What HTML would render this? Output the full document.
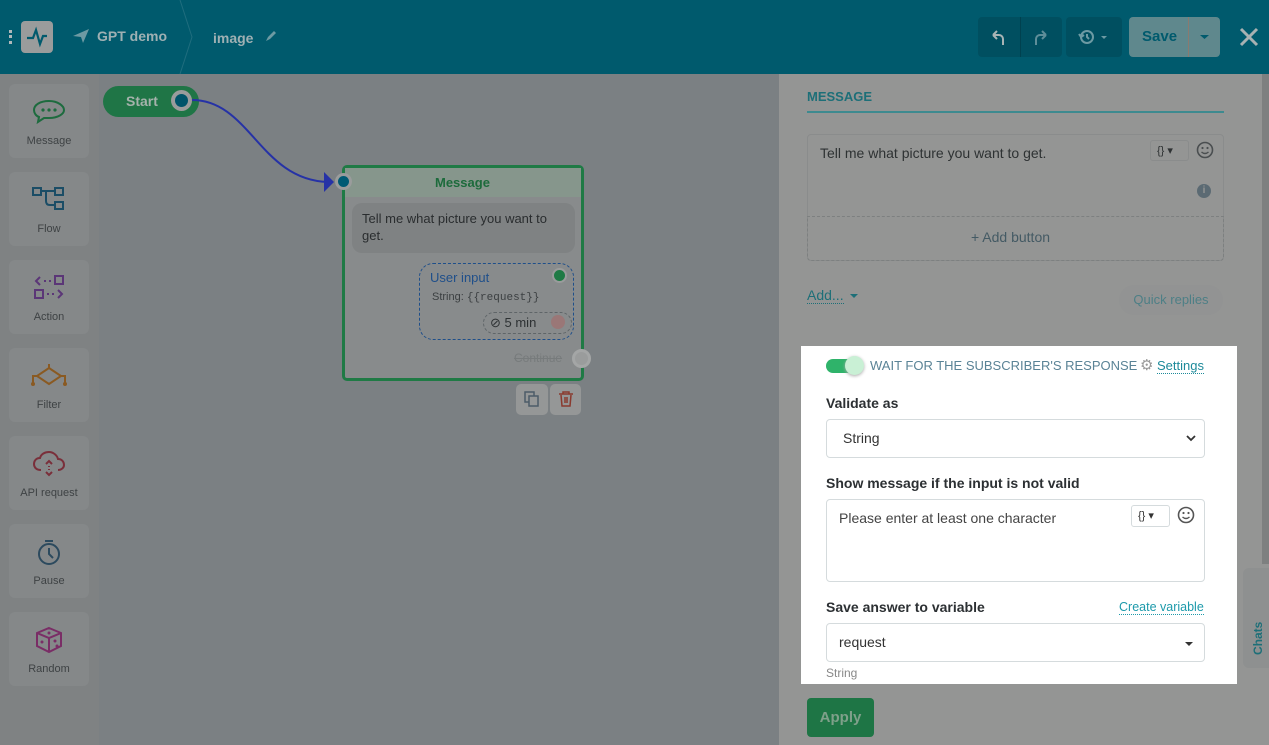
<!DOCTYPE html>
<html><head><meta charset="utf-8"><style>
*{box-sizing:border-box;margin:0;padding:0}
body{width:1269px;height:745px;overflow:hidden;font-family:"Liberation Sans",sans-serif;position:relative;background:#7b8083}
.hdr{position:absolute;left:0;top:0;width:1269px;height:74px;background:#005a6d}
.abs{position:absolute}
.side{position:absolute;left:0;top:74px;width:99px;height:671px;background:#7f8283}
.item{position:absolute;left:9px;width:80px;height:74px;background:#858889;border-radius:6px;text-align:center;font-size:11px;color:#3e4244}
.item svg{display:block;margin:14px auto 9px}
.panel{position:absolute;left:779px;top:74px;width:490px;height:671px;background:#949594}
.hl{position:absolute;left:801px;top:346px;width:436px;height:338px;background:#fff}
.lbl{position:absolute;font-size:14px;font-weight:bold;color:#2c3033}
.inp{position:absolute;border:1px solid #d5dbdd;border-radius:4px;background:#fff;font-size:14px;color:#333}
.btn{position:absolute;background:#004f60;border-radius:4px}
</style></head><body>
<div class="hdr">
  <div class="abs" style="left:9px;top:30px;width:3px;height:14px;border-left:3px dotted #b0b8ba"></div>
  <div class="abs" style="left:21px;top:21px;width:32px;height:32px;background:#9a9c9c;border-radius:4px"></div>
  <svg class="abs" style="left:24px;top:24px" width="26" height="26"><path d="M3 14h6l3-8 4 14 3-8h4" stroke="#005a6d" stroke-width="2.2" fill="none"/></svg>
  <svg class="abs" style="left:73px;top:29px" width="16" height="14"><path d="M0 7 L16 0 L10 14 L8 8Z" fill="#6d9aa3"/></svg>
  <div class="abs" style="left:97px;top:28px;font-size:14px;font-weight:bold;color:#9fb0b3">GPT demo</div>
  <svg class="abs" style="left:178px;top:0" width="16" height="74"><path d="M2 0 L14 37 L2 74" stroke="#1f6d7e" fill="none"/></svg>
  <div class="abs" style="left:213px;top:30px;font-size:14px;font-weight:bold;color:#9fb0b3">image</div>
  <svg class="abs" style="left:265px;top:30px" width="12" height="12"><path d="M1 11 L3 7 L9 1 L11 3 L5 9Z" fill="#6d9aa3"/></svg>
  <div class="btn" style="left:978px;top:17px;width:84px;height:40px"></div>
  <div class="abs" style="left:1020px;top:17px;width:1px;height:40px;background:#00414f"></div>
  <svg class="abs" style="left:990px;top:28px" width="16" height="18"><path d="M3 7h6a4 4 0 0 1 4 4v6M3 7l4-4M3 7l4 4" stroke="#a8b4b5" stroke-width="2" fill="none"/></svg>
  <svg class="abs" style="left:1033px;top:28px" width="16" height="18"><path d="M13 7H7a4 4 0 0 0-4 4v6M13 7l-4-4M13 7l-4 4" stroke="#5e8e99" stroke-width="2" fill="none"/></svg>
  <div class="btn" style="left:1066px;top:17px;width:56px;height:40px"></div>
  <svg class="abs" style="left:1078px;top:28px" width="32" height="18"><circle cx="9" cy="9" r="6" stroke="#6d9aa3" stroke-width="2" fill="none"/><path d="M9 6v3l2 2M1 6l2 3 3-2" stroke="#6d9aa3" stroke-width="2" fill="none"/><path d="M23 8h6l-3 3z" fill="#6d9aa3"/></svg>
  <div class="abs" style="left:1129px;top:17px;width:91px;height:40px;background:#5f888d;border-radius:4px"></div>
  <div class="abs" style="left:1188px;top:17px;width:1px;height:40px;background:#8a7a70"></div>
  <div class="abs" style="left:1142px;top:28px;font-size:15px;font-weight:bold;color:#005a6d">Save</div>
  <svg class="abs" style="left:1199px;top:34px" width="12" height="6"><path d="M1 1h9l-4.5 4z" fill="#005a6d"/></svg>
  <svg class="abs" style="left:1239px;top:27px" width="20" height="20"><path d="M2 2l16 16M18 2L2 18" stroke="#a8b1b2" stroke-width="3"/></svg>
</div>
<div class="side">
  <div class="item" style="top:10px"><svg width="36" height="28"><path d="M18 3C9 3 3 7 3 12c0 3 2 6 5 7l-1 5 6-4c2 0 3 0 5 0 9 0 15-4 15-8S27 3 18 3z" stroke="#1d6b3e" stroke-width="2" fill="none"/><circle cx="12" cy="12" r="1.6" fill="#1d6b3e"/><circle cx="18" cy="12" r="1.6" fill="#1d6b3e"/><circle cx="24" cy="12" r="1.6" fill="#1d6b3e"/></svg>Message</div>
  <div class="item" style="top:98px"><svg width="36" height="28"><rect x="2" y="2" width="8" height="7" stroke="#1b4d66" stroke-width="2" fill="none"/><rect x="24" y="2" width="8" height="7" stroke="#1b4d66" stroke-width="2" fill="none"/><rect x="24" y="16" width="8" height="7" stroke="#1b4d66" stroke-width="2" fill="none"/><path d="M10 5h14M15 5v10q0 4 4 4h5" stroke="#1b4d66" stroke-width="2" fill="none"/></svg>Flow</div>
  <div class="item" style="top:186px"><svg width="36" height="28"><path d="M9 3l-4 4 4 4M13 7h2M18 7h2" stroke="#5b3677" stroke-width="2" fill="none"/><rect x="24" y="2" width="8" height="8" stroke="#5b3677" stroke-width="2" fill="none"/><rect x="4" y="16" width="8" height="8" stroke="#5b3677" stroke-width="2" fill="none"/><path d="M16 20h2M21 20h2M27 16l4 4-4 4" stroke="#5b3677" stroke-width="2" fill="none"/></svg>Action</div>
  <div class="item" style="top:274px"><svg width="40" height="28"><path d="M20 2v4M20 6l12 8-12 8-12-8zM8 14H4v7M32 14h4v7" stroke="#8a5a22" stroke-width="2" fill="none"/><circle cx="4" cy="22" r="2" fill="#8a5a22"/><circle cx="36" cy="22" r="2" fill="#8a5a22"/></svg>Filter</div>
  <div class="item" style="top:362px"><svg width="36" height="28"><path d="M10 20C5 20 3 17 3 14s2-6 6-6c1-4 5-6 9-6s8 3 9 7c4 0 6 3 6 6s-3 5-6 5" stroke="#7a2f3a" stroke-width="2" fill="none"/><path d="M15 14l3-3 3 3M15 22l3 3 3-3M18 16v1M18 19v1" stroke="#7a2f3a" stroke-width="2" fill="none"/></svg>API request</div>
  <div class="item" style="top:450px"><svg width="36" height="28"><circle cx="18" cy="16" r="10" stroke="#2c4a5e" stroke-width="2" fill="none"/><path d="M14 3h8M18 10v6l4 4" stroke="#2c4a5e" stroke-width="2" fill="none"/></svg>Pause</div>
  <div class="item" style="top:538px"><svg width="36" height="28"><path d="M18 2l12 5v13l-12 6-12-6V7z M6 7l12 5 12-5 M18 12v14" stroke="#7a2d66" stroke-width="2" fill="none"/><circle cx="18" cy="7" r="1.5" fill="#7a2d66"/><circle cx="11" cy="16" r="1.5" fill="#7a2d66"/><circle cx="24" cy="15" r="1.5" fill="#7a2d66"/><circle cx="26" cy="20" r="1.5" fill="#7a2d66"/></svg>Random</div>
</div>
<!-- canvas -->
<div class="abs" style="left:103px;top:86px;width:96px;height:31px;background:#1f7546;border-radius:16px"></div>
<div class="abs" style="left:126px;top:93px;font-size:14px;font-weight:bold;color:#a5b2ab">Start</div>
<div class="abs" style="left:171px;top:90px;width:21px;height:21px;border-radius:50%;background:#9a9c9c"></div>
<div class="abs" style="left:175px;top:94px;width:13px;height:13px;border-radius:50%;background:#00546a"></div>
<svg class="abs" style="left:190px;top:95px" width="150" height="100"><path d="M2 5C60 5 70 85 138 87" stroke="#2632a6" stroke-width="2" fill="none"/><path d="M134 77l10 10-10 10z" fill="#2632a6"/></svg>
<div class="abs" style="left:342px;top:165px;width:242px;height:216px;border:3px solid #1f7a45;border-radius:5px;background:#888b8c"></div>
<div class="abs" style="left:345px;top:168px;width:236px;height:29px;background:#86968c"></div>
<div class="abs" style="left:435px;top:175px;font-size:13px;font-weight:bold;color:#1d6b3c">Message</div>
<div class="abs" style="left:335px;top:173px;width:17px;height:17px;border-radius:50%;background:#9a9c9c"></div>
<div class="abs" style="left:338px;top:176px;width:11px;height:11px;border-radius:50%;background:#005a74"></div>
<div class="abs" style="left:352px;top:203px;width:223px;height:50px;background:#7f8283;border-radius:10px;padding:7px 10px;font-size:13px;color:#2a2d2f;line-height:17px">Tell me what picture you want to get.</div>
<div class="abs" style="left:419px;top:263px;width:155px;height:77px;border:1px dashed #1f4f8a;border-radius:14px"></div>
<div class="abs" style="left:430px;top:270px;font-size:13px;color:#1f4f8a">User input</div>
<div class="abs" style="left:552px;top:268px;width:15px;height:15px;border-radius:50%;background:#1f7a45;border:2px solid #9a9c9c"></div>
<div class="abs" style="left:432px;top:291px;font-size:11px;color:#3b3f41">String: <span style="font-family:'Liberation Mono',monospace">{{request}}</span></div>
<div class="abs" style="left:483px;top:312px;width:89px;height:22px;border:1px dashed #5f6568;border-radius:11px"></div>
<div class="abs" style="left:490px;top:315px;font-size:13px;color:#2d3133">⊘ 5 min</div>
<div class="abs" style="left:551px;top:315px;width:14px;height:14px;border-radius:50%;background:#9a7777"></div>
<div class="abs" style="left:514px;top:351px;font-size:12px;color:#777b7c;text-decoration:line-through">Continue</div>
<div class="abs" style="left:572px;top:349px;width:19px;height:19px;border-radius:50%;background:#9a9c9c;border:3px solid #a4a6a6"></div>
<div class="abs" style="left:516px;top:384px;width:32px;height:31px;background:#959797;border-radius:5px"></div>
<svg class="abs" style="left:524px;top:391px" width="16" height="16"><rect x="1" y="1" width="9" height="10" stroke="#4d5c68" stroke-width="1.5" fill="none"/><rect x="5" y="5" width="9" height="10" stroke="#4d5c68" stroke-width="1.5" fill="#959797"/></svg>
<div class="abs" style="left:550px;top:384px;width:31px;height:31px;background:#959797;border-radius:5px"></div>
<svg class="abs" style="left:558px;top:391px" width="16" height="16"><path d="M1 3h14M5 3V1h6v2M3 4l1 11h8l1-11M7 6v6M9 6v6" stroke="#8a3a2e" stroke-width="1.5" fill="none"/></svg>
<!-- panel -->
<div class="panel"></div>
<div class="abs" style="left:1262px;top:74px;width:7px;height:490px;background:#7e8080"></div>
<div class="abs" style="left:807px;top:89px;font-size:13px;font-weight:bold;color:#1d6f78">MESSAGE</div>
<div class="abs" style="left:807px;top:111px;width:417px;height:2px;background:#3d8a8f"></div>
<div class="abs" style="left:807px;top:134px;width:417px;height:127px;border:1px solid #8a8c8c;border-radius:4px"></div>
<div class="abs" style="left:807px;top:216px;width:417px;height:45px;border:1px dashed #7d8080;border-radius:0 0 4px 4px"></div>
<div class="abs" style="left:820px;top:145px;font-size:14px;color:#2e3233">Tell me what picture you want to get.</div>
<div class="abs" style="left:1150px;top:140px;width:39px;height:21px;border:1px solid #8a8c8c;border-radius:3px;font-size:11px;color:#2e3233;padding:3px 6px">{} ▾</div>
<svg class="abs" style="left:1196px;top:141px" width="18" height="18"><circle cx="9" cy="9" r="7.5" stroke="#4a4e50" stroke-width="1.6" fill="none"/><circle cx="6.5" cy="7" r="1.1" fill="#4a4e50"/><circle cx="11.5" cy="7" r="1.1" fill="#4a4e50"/><path d="M5.5 11q3.5 3 7 0" stroke="#4a4e50" stroke-width="1.4" fill="none"/></svg>
<div class="abs" style="left:1197px;top:184px;width:14px;height:14px;border-radius:50%;background:#5b6a73;color:#949594;font-size:10px;font-weight:bold;text-align:center;line-height:14px">i</div>
<div class="abs" style="left:971px;top:229px;font-size:14px;color:#445a64">+ Add button</div>
<div class="abs" style="left:807px;top:287px;font-size:14px;color:#1d6f78;border-bottom:1px dotted #1d6f78">Add...</div>
<svg class="abs" style="left:849px;top:293px" width="10" height="6"><path d="M1 1h8l-4 4z" fill="#1d6f78"/></svg>
<div class="abs" style="left:1119px;top:285px;width:104px;height:30px;background:#929393;border-radius:15px;font-size:13px;color:#4d7f86;text-align:center;line-height:30px">Quick replies</div>
<div class="hl"></div>
<div class="abs" style="left:826px;top:359px;width:36px;height:14px;background:#2fb36a;border-radius:7px"></div>
<div class="abs" style="left:845px;top:356px;width:19px;height:19px;background:#c9f0d5;border-radius:50%;box-shadow:0 1px 3px #aaa"></div>
<div class="abs" style="left:870px;top:358px;font-size:13px;color:#5a8396">WAIT FOR THE SUBSCRIBER'S RESPONSE</div>
<div class="abs" style="left:1140px;top:356px;font-size:15px;color:#999">⚙</div>
<div class="abs" style="left:1157px;top:358px;font-size:13px;color:#1d8a9a;border-bottom:1px dotted #1d8a9a">Settings</div>
<div class="lbl" style="left:826px;top:395px">Validate as</div>
<div class="inp" style="left:826px;top:419px;width:379px;height:39px;padding:10px 16px">String<svg style="position:absolute;right:8px;top:15px" width="10" height="7"><path d="M1 1l4 4 4-4" stroke="#333" stroke-width="1.8" fill="none"/></svg></div>
<div class="lbl" style="left:826px;top:475px">Show message if the input is not valid</div>
<div class="inp" style="left:826px;top:499px;width:379px;height:83px;padding:10px 12px;color:#444">Please enter at least one character</div>
<div class="abs" style="left:1131px;top:505px;width:39px;height:22px;border:1px solid #d5dbdd;border-radius:3px;font-size:11px;color:#333;padding:3px 6px">{} ▾</div>
<svg class="abs" style="left:1177px;top:506px" width="18" height="18"><circle cx="9" cy="9" r="7.5" stroke="#555" stroke-width="1.6" fill="none"/><circle cx="6.5" cy="7" r="1.1" fill="#555"/><circle cx="11.5" cy="7" r="1.1" fill="#555"/><path d="M5.5 11q3.5 3 7 0" stroke="#555" stroke-width="1.4" fill="none"/></svg>
<div class="lbl" style="left:826px;top:599px">Save answer to variable</div>
<div class="abs" style="left:1119px;top:600px;font-size:12.5px;color:#1d9aab;border-bottom:1px dotted #1d9aab">Create variable</div>
<div class="inp" style="left:826px;top:623px;width:379px;height:39px;padding:10px 12px">request<svg style="position:absolute;right:10px;top:17px" width="10" height="6"><path d="M1 1h8l-4 4z" fill="#333"/></svg></div>
<div class="abs" style="left:826px;top:666px;font-size:12px;color:#888">String</div>
<div class="abs" style="left:807px;top:698px;width:67px;height:39px;background:#1e7545;border-radius:4px;font-size:15px;font-weight:bold;color:#7fa08a;text-align:center;line-height:39px">Apply</div>
<div class="abs" style="left:1243px;top:568px;width:26px;height:100px;background:#8e9090;border-radius:6px 0 0 6px"></div>
<div class="abs" style="left:1251px;top:655px;font-size:12px;font-weight:bold;color:#1d6f78;transform:rotate(-90deg);transform-origin:0 0">Chats</div>
</body></html>
